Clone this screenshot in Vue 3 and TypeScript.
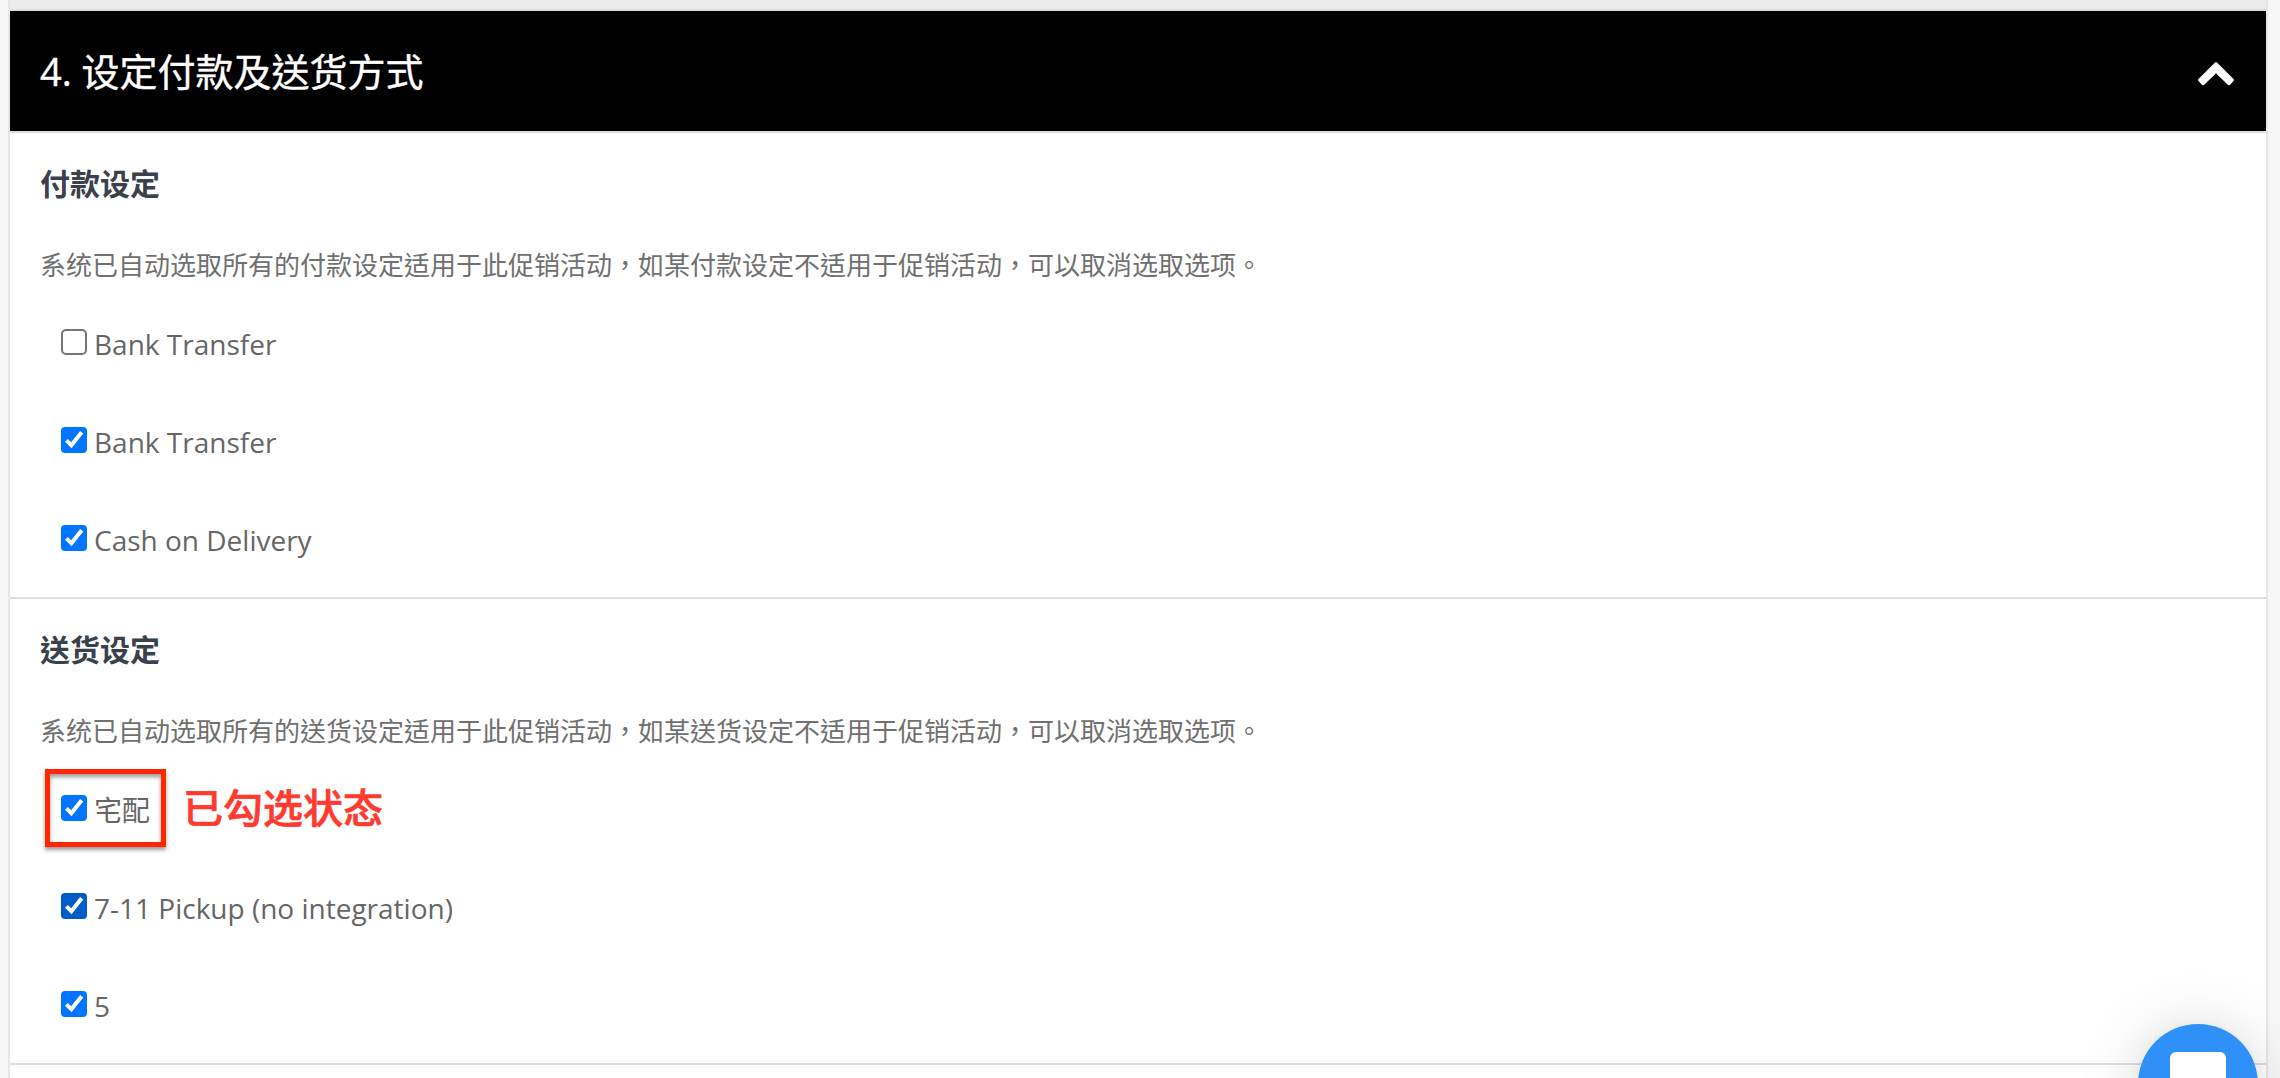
<template>
  <div class="page">
    <div class="panel">
      <header class="panel-header">
        <h2 class="panel-title">4. 设定付款及送货方式</h2>
        <svg class="chevron" width="36" height="24" viewBox="0 0 36 24">
          <path
            d="M17 .6Q18-.3 19 .6L35.5 17Q36.4 18 35.5 19L31.9 22.9Q31 23.8 30 22.9L18 11.2 6 22.9Q5 23.8 4.1 22.9L.5 19Q-.4 18 .5 17Z"
            fill="#fff"
          />
        </svg>
      </header>

      <section v-for="section in sections" :key="section.title" class="section">
        <h3 class="section-title">{{ section.title }}</h3>
        <p class="section-desc">{{ section.description }}</p>
        <ul class="options">
          <li v-for="option in section.options" :key="option.id" class="option">
            <label class="option-label" :class="{ highlighted: option.note }">
              <input
                v-model="option.checked"
                type="checkbox"
                class="option-input"
              />
              <span
                class="box"
                :class="{ checked: option.checked, hovered: option.hovered }"
              >
                <svg v-if="option.checked" width="26" height="26" viewBox="0 0 26 26">
                  <path d="M5.4 13.4L10.4 18.3L20.7 5.2" fill="none" stroke="#fff" stroke-width="4" />
                </svg>
              </span>
              <span>{{ option.name }}</span>
            </label>
            <span v-if="option.note" class="note">{{ option.note }}</span>
          </li>
        </ul>
      </section>
    </div>

    <button class="chat" aria-label="Chat">
      <span class="chat-icon"></span>
    </button>
  </div>
</template>

<script setup lang="ts">
import { ref } from 'vue'

interface Option {
  id: number
  name: string
  checked: boolean
  hovered?: boolean
  note?: string
}

interface Section {
  title: string
  description: string
  options: Option[]
}

const sections = ref<Section[]>([
  {
    title: '付款设定',
    description:
      '系统已自动选取所有的付款设定适用于此促销活动，如某付款设定不适用于促销活动，可以取消选取选项。',
    options: [
      { id: 1, name: 'Bank Transfer', checked: false },
      { id: 2, name: 'Bank Transfer', checked: true },
      { id: 3, name: 'Cash on Delivery', checked: true }
    ]
  },
  {
    title: '送货设定',
    description:
      '系统已自动选取所有的送货设定适用于此促销活动，如某送货设定不适用于促销活动，可以取消选取选项。',
    options: [
      { id: 4, name: '宅配', checked: true, note: '已勾选状态' },
      { id: 5, name: '7-11 Pickup (no integration)', checked: true, hovered: true },
      { id: 6, name: '5', checked: true }
    ]
  }
])
</script>

<style>
body {
  margin: 0;
  background: #f7f7f7;
}
</style>

<style scoped>
.page {
  box-sizing: border-box;
  height: 1078px;
  padding: 0 12px 0 8px;
  overflow: hidden;
  position: relative;
  font-family: 'Open Sans', 'Noto Sans CJK TC', sans-serif;
  color: #666;
}

.panel {
  display: flow-root;
  box-sizing: border-box;
  height: 1078px;
  border: solid #e6e6e6;
  border-width: 0 2px;
  background: #fff;
}

.panel-header {
  display: flex;
  align-items: center;
  justify-content: space-between;
  height: 120px;
  margin-top: 9px;
  padding: 0 32px 0 30px;
  border-top: 2px solid #ddd;
  border-bottom: 2px solid #ddd;
  background: #000;
  box-shadow: 0 -9px 0 #ebebeb;
}

.panel-title {
  margin: 0;
  font-size: 38px;
  font-weight: 400;
  line-height: 56px;
  color: #fff;
  -webkit-text-stroke: 0.4px #fff;
}

.chevron {
  display: block;
  margin-top: 6px;
}

.section {
  box-sizing: border-box;
  height: 466px;
  padding: 31px 30px 0;
  border-bottom: 2px solid #ddd;
}

.section-title {
  margin: 0;
  font-size: 30px;
  font-weight: 700;
  line-height: 40px;
  color: #3a414c;
}

.section-desc {
  margin: 41px 0 0;
  font-size: 26px;
  line-height: 40px;
  color: #707070;
}

.options {
  display: flex;
  flex-direction: column;
  gap: 20px;
  margin: 18px 0 0;
  padding: 0 0 0 5px;
  list-style: none;
}

.option {
  display: flex;
  align-items: center;
  gap: 17px;
  height: 78px;
}

.option-label {
  box-sizing: border-box;
  display: flex;
  align-items: center;
  gap: 7px;
  height: 78px;
  padding: 4px 16px 0;
  font-size: 28px;
  line-height: 40px;
}

.highlighted {
  width: 121px;
  padding: 4px 11px 0;
  border: 5px solid #ff2600;
  box-shadow:
    0 3px 4px rgba(0, 0, 0, 0.4),
    inset 0 3px 4px rgba(0, 0, 0, 0.4);
  white-space: nowrap;
}

.option-input {
  position: absolute;
  opacity: 0;
}

.box {
  box-sizing: border-box;
  width: 26px;
  height: 26px;
  flex: none;
  margin-bottom: 4px;
  border: 2px solid #767676;
  border-radius: 5px;
  background: #fff;
}

.box svg {
  display: block;
}

.box.checked {
  border: 0;
  border-radius: 4px;
  background: #0075ff;
}

.box.hovered {
  background: #005cc8;
}

.note {
  font-size: 40px;
  font-weight: 500;
  line-height: 56px;
  color: #ff3b30;
  -webkit-text-stroke: 0.7px #ff3b30;
}

.chat {
  position: absolute;
  top: 1024px;
  right: 22px;
  display: flex;
  justify-content: center;
  width: 120px;
  height: 120px;
  padding: 28px 0 0;
  border: 0;
  border-radius: 50%;
  background: #2f90f8;
  box-shadow:
    0 2px 12px rgba(0, 0, 0, 0.06),
    0 4px 64px rgba(0, 0, 0, 0.16);
}

.chat-icon {
  width: 56px;
  height: 56px;
  border-radius: 6px;
  background: #fff;
}
</style>
